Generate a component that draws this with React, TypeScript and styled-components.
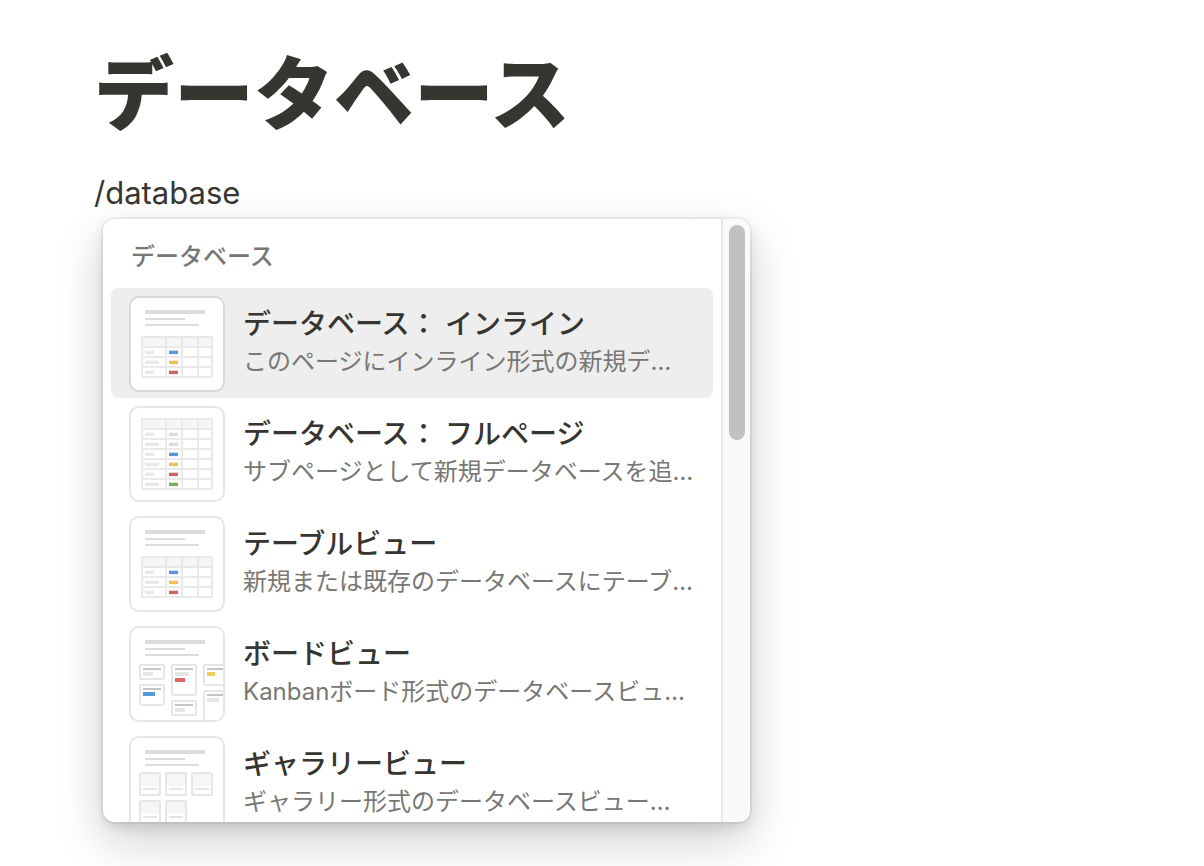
import React from "react";
import styled, { createGlobalStyle } from "styled-components";

const GlobalStyle = createGlobalStyle`
  * { box-sizing: border-box; }
  body {
    margin: 0;
    background: #fff;
    color: #37352f;
    font-family: Inter, "Noto Sans CJK JP", sans-serif;
  }
`;

const Page = styled.main`
  padding: 46px 94px 44px;
`;

const PageTitle = styled.h1`
  margin: 0;
  font-size: 80px;
  line-height: 96px;
  font-weight: 900;
`;

const Command = styled.p`
  margin: 28px 0 0;
  font-size: 31px;
  line-height: 46px;
`;

const Menu = styled.div`
  display: flex;
  width: 100%;
  max-width: 647px;
  height: 603px;
  margin: 3px 0 0 9px;
  overflow: hidden;
  border-radius: 12px;
  background: #fff;
  box-shadow:
    0 0 0 2px rgba(15, 15, 15, 0.05),
    0 6px 12px rgba(15, 15, 15, 0.1),
    0 18px 48px rgba(15, 15, 15, 0.2);
`;

const MenuBody = styled.section`
  flex: 1;
  min-width: 0;
  padding: 18px 8px 0;
`;

const SectionLabel = styled.h2`
  margin: 0 0 11px;
  padding: 0 20px;
  color: #787774;
  font-size: 24px;
  line-height: 40px;
  font-weight: 500;
`;

const Options = styled.ul`
  margin: 0;
  padding: 0;
  list-style: none;
`;

const Option = styled.button<{ $active?: boolean }>`
  display: flex;
  gap: 18px;
  width: 100%;
  padding: 8px 18px 6px;
  border: 0;
  border-radius: 8px;
  background: ${(p) => (p.$active ? "#eeeeee" : "transparent")};
  color: inherit;
  font: inherit;
  text-align: left;
`;

const Thumb = styled.span<{ $active?: boolean }>`
  flex: none;
  width: 96px;
  height: 96px;
  overflow: hidden;
  border: 2px solid ${(p) => (p.$active ? "#d8d8d8" : "#e6e6e6")};
  border-radius: 10px;
  background: #fff;

  svg { display: block; }
`;

const OptionText = styled.span`
  flex: 1;
  min-width: 0;
  padding-top: 8px;
  white-space: nowrap;
`;

const OptionTitle = styled.span`
  display: block;
  font-size: 28px;
  line-height: 40px;
  font-weight: 500;
`;

const OptionNote = styled.span`
  display: block;
  color: #787774;
  font-size: 24px;
  line-height: 36px;
`;

const ScrollTrack = styled.div`
  flex: none;
  width: 29px;
  padding: 6px 5px 6px 6px;
  border-left: 2px solid #e8e8e8;
  background: #fafafa;
`;

const ScrollHandle = styled.div`
  width: 16px;
  height: 215px;
  border-radius: 8px;
  background: #c1c1c1;
`;

const Drawing = ({ children }: { children: React.ReactNode }) => (
  <svg width="92" height="92" viewBox="2 2 92 92" aria-hidden="true">
    {children}
  </svg>
);

const Lines = () => (
  <g fill="#dcdcdc">
    <rect x="16" y="14" width="60" height="4" />
    <rect x="16" y="22" width="40" height="2" />
    <rect x="16" y="28" width="54" height="2" />
  </g>
);

const BLUE = "#5b97d5";
const YELLOW = "#ecc15c";
const RED = "#cb6560";
const GREEN = "#76b05f";
const GRAY = "#dcdcdc";

const columns = [
  [14, 22],
  [38, 14],
  [54, 14],
  [70, 12],
];

const Grid = ({ top, tags }: { top: number; tags: string[] }) => (
  <g>
    <rect x="12" y={top} width="72" height={tags.length * 10 + 12} rx="1" fill="#e9e9e9" />
    {columns.map(([x, w]) => (
      <g key={x}>
        <rect x={x} y={top + 2} width={w} height="8" fill="#f6f6f6" />
        {tags.map((_, i) => (
          <rect key={i} x={x} y={top + 12 + i * 10} width={w} height="8" fill="#fff" />
        ))}
      </g>
    ))}
    {tags.map((tag, i) => (
      <g key={i}>
        <rect x="16" y={top + 14.7 + i * 10} width={i % 2 ? 14 : 9} height="3.4" fill="#e9e9e9" />
        <rect x="40" y={top + 14.7 + i * 10} width="9" height="3.4" fill={tag} />
      </g>
    ))}
  </g>
);

const TableDrawing = () => (
  <Drawing>
    <Lines />
    <Grid top={40} tags={[BLUE, YELLOW, RED]} />
  </Drawing>
);

const FullPageDrawing = () => (
  <Drawing>
    <Grid top={12} tags={[GRAY, GRAY, BLUE, YELLOW, RED, GREEN]} />
  </Drawing>
);

type CardProps = { x: number; y: number; h: number; tags: [number, string][] };

const Card = ({ x, y, h, tags }: CardProps) => (
  <g>
    <rect x={x + 1} y={y + 1} width="24" height={h - 2} rx="1" fill="#fff" stroke="#e6e6e6" strokeWidth="2" />
    <rect x={x + 4} y={y + 4} width="18" height="2" fill="#c4c4c4" />
    {tags.map(([w, color], i) => (
      <rect key={i} x={x + 4} y={y + 8 + i * 6} width={w} height="4" fill={color} />
    ))}
  </g>
);

const BoardDrawing = () => (
  <Drawing>
    <Lines />
    <Card x={10} y={38} h={16} tags={[[10, "#e6e6e6"]]} />
    <Card x={10} y={58} h={22} tags={[[12, "#4f9bd9"]]} />
    <Card x={42} y={38} h={32} tags={[[14, "#e6e6e6"], [10, "#df6560"]]} />
    <Card x={42} y={74} h={16} tags={[[10, "#e6e6e6"]]} />
    <Card x={74} y={38} h={22} tags={[[8, "#edcb60"]]} />
    <Card x={74} y={64} h={40} tags={[[12, "#e6e6e6"]]} />
  </Drawing>
);

const galleryCards = [
  [10, 36],
  [36, 36],
  [62, 36],
  [10, 64],
  [36, 64],
];

const GalleryDrawing = () => (
  <Drawing>
    <Lines />
    {galleryCards.map(([x, y]) => (
      <g key={`${x}-${y}`}>
        <rect x={x + 1} y={y + 1} width="20" height="22" rx="1" fill="#fff" stroke="#e6e6e6" strokeWidth="2" />
        <rect x={x + 2} y={y + 2} width="18" height="12" fill="#f6f6f6" />
        <rect x={x + 4} y={y + 16} width="14" height="2" fill="#e6e6e6" />
      </g>
    ))}
  </Drawing>
);

const options = [
  { title: "データベース： インライン", note: "このページにインライン形式の新規デ…", art: <TableDrawing />, active: true },
  { title: "データベース： フルページ", note: "サブページとして新規データベースを追…", art: <FullPageDrawing /> },
  { title: "テーブルビュー", note: "新規または既存のデータベースにテーブ…", art: <TableDrawing /> },
  { title: "ボードビュー", note: "Kanbanボード形式のデータベースビュ…", art: <BoardDrawing /> },
  { title: "ギャラリービュー", note: "ギャラリー形式のデータベースビュー…", art: <GalleryDrawing /> },
];

export default function App() {
  return (
    <Page lang="ja">
      <GlobalStyle />
      <PageTitle>データベース</PageTitle>
      <Command>/database</Command>
      <Menu>
        <MenuBody>
          <SectionLabel>データベース</SectionLabel>
          <Options>
            {options.map((o) => (
              <li key={o.title}>
                <Option type="button" $active={o.active}>
                  <Thumb $active={o.active}>{o.art}</Thumb>
                  <OptionText>
                    <OptionTitle>{o.title}</OptionTitle>
                    <OptionNote>{o.note}</OptionNote>
                  </OptionText>
                </Option>
              </li>
            ))}
          </Options>
        </MenuBody>
        <ScrollTrack>
          <ScrollHandle />
        </ScrollTrack>
      </Menu>
    </Page>
  );
}
